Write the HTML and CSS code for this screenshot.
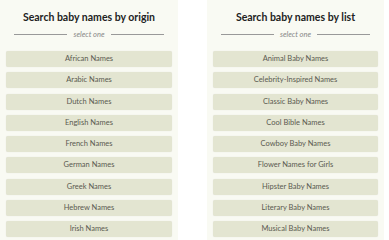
FILE: index.html
```html
<!DOCTYPE html>
<html lang="en">
<head>
  <meta charset="UTF-8">
  <meta name="viewport" content="width=device-width, initial-scale=1.0">
  <title>Search baby names</title>
  <link rel="stylesheet" href="styles.css">
</head>
<body>
  <div class="page">
    <div class="panel">
      <h2>Search baby names by origin</h2>
      <div class="divider"><span>select one</span></div>
      <div class="list">
        <a class="btn" href="#">African Names</a>
        <a class="btn" href="#">Arabic Names</a>
        <a class="btn" href="#">Dutch Names</a>
        <a class="btn" href="#">English Names</a>
        <a class="btn" href="#">French Names</a>
        <a class="btn" href="#">German Names</a>
        <a class="btn" href="#">Greek Names</a>
        <a class="btn" href="#">Hebrew Names</a>
        <a class="btn" href="#">Irish Names</a>
      </div>
    </div>
    <div class="panel">
      <h2>Search baby names by list</h2>
      <div class="divider"><span>select one</span></div>
      <div class="list">
        <a class="btn" href="#">Animal Baby Names</a>
        <a class="btn" href="#">Celebrity-Inspired Names</a>
        <a class="btn" href="#">Classic Baby Names</a>
        <a class="btn" href="#">Cool Bible Names</a>
        <a class="btn" href="#">Cowboy Baby Names</a>
        <a class="btn" href="#">Flower Names for Girls</a>
        <a class="btn" href="#">Hipster Baby Names</a>
        <a class="btn" href="#">Literary Baby Names</a>
        <a class="btn" href="#">Musical Baby Names</a>
      </div>
    </div>
  </div>
</body>
</html>
```

FILE: styles.css
```css
body {
  margin: 0;
  font-family: Lato, "Open Sans", sans-serif;
  background-color: #ffffff;
}
.page {
  display: flex;
  gap: 29px;
  height: 240px;
  overflow: hidden;
}
.panel {
  width: 166px;
  padding: 10px 6px 0;
  background-color: #f9faf3;
}
.panel:last-child {
  width: 165px;
}
h2 {
  margin: 0;
  text-align: center;
  font-size: 10.5px;
  font-weight: bold;
  color: #222;
  line-height: 14px;
}
.divider {
  display: flex;
  align-items: center;
  gap: 6px;
  margin: 2px 8px 0;
  height: 16px;
  font-size: 7.5px;
  font-style: italic;
  color: #888;
}
.divider::before,
.divider::after {
  content: "";
  flex: 1;
  height: 1px;
  background-color: #999;
}
.list {
  display: flex;
  flex-direction: column;
  gap: 5.3px;
  margin-top: 9px;
}
.btn {
  display: block;
  height: 16px;
  line-height: 16px;
  text-align: center;
  font-size: 7.5px;
  color: #5a5a50;
  text-decoration: none;
  background-color: #e3e5d1;
  border-radius: 2px;
  box-shadow: 0 0 1px rgba(0, 0, 0, 0.12);
}
```
